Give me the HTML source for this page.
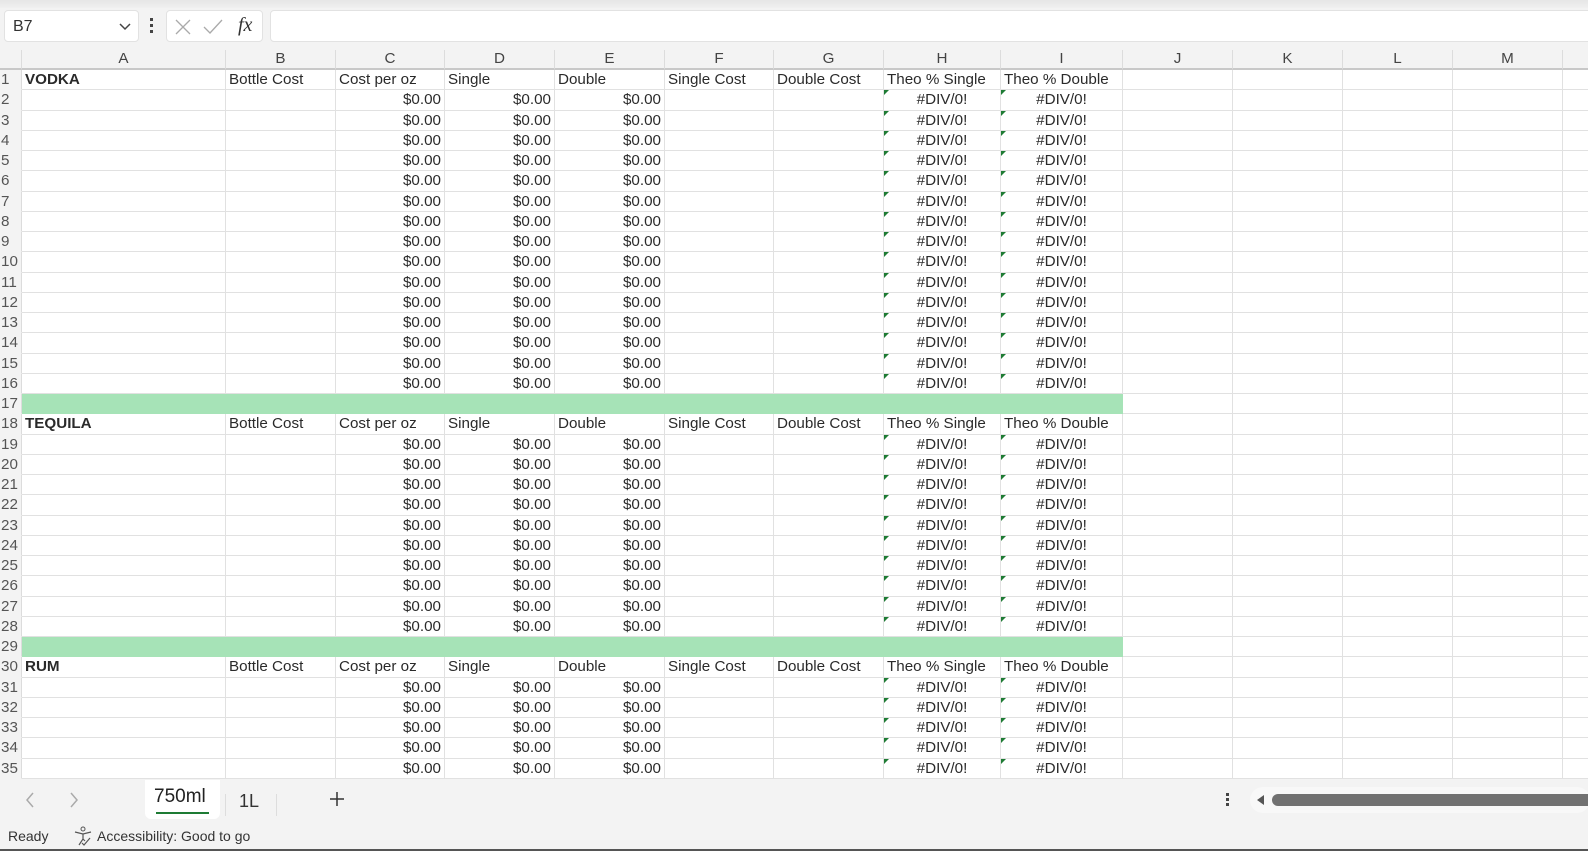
<!DOCTYPE html>
<html><head><meta charset="utf-8"><style>
*{box-sizing:border-box}
body{margin:0;width:1588px;height:851px;overflow:hidden;background:#f3f3f3;font-family:"Liberation Sans",Arial,sans-serif;position:relative}
.top{position:absolute;left:0;top:0;width:1588px;height:8px;background:linear-gradient(#e6e6e6,#f0f0f0)}
.nb{position:absolute;left:4px;top:10px;width:135px;height:32px;background:#fff;border:1px solid #e2e2e2;border-radius:4px;font-size:16px;color:#333;padding:7px 0 0 8px}
.fx{position:absolute;left:166px;top:10px;width:97px;height:32px;background:#fff;border:1px solid #e2e2e2;border-radius:4px}
.fb{position:absolute;left:270px;top:10px;width:1330px;height:32px;background:#fff;border:1px solid #e2e2e2;border-radius:4px}
table{position:absolute;left:0;top:50px;border-collapse:separate;border-spacing:0;table-layout:fixed;width:1613px;font-size:15.2px;color:#2a2a2a}
td{height:20.26px;padding:0 3px;border:0;border-right:1px solid #e1e1e1;border-bottom:1px solid #e1e1e1;background:#fff;white-space:nowrap;overflow:hidden;line-height:19px}
tr.h td{height:20px;background:#f3f3f3;color:#444;text-align:center;border-right-color:#dcdcdc;border-bottom:2px solid #c8c8c8;line-height:18px}
td.r{background:#f3f3f3;color:#555;padding:0 1px;border-bottom-color:#f3f3f3;border-right:1px solid #dcdcdc}
.n{text-align:right}
.d{text-align:center;position:relative}
.d:before{content:"";position:absolute;left:0;top:0;border-top:5px solid #1e7b34;border-right:5px solid transparent}
.g td.c{background:#a6e3b7;border-color:#a6e3b7}
.b{font-weight:bold}
.tabs{position:absolute;left:0;top:780px;width:1588px;height:43px;background:#f3f3f3}
.status{position:absolute;left:0;top:823px;width:1588px;height:26px;background:#f3f3f3;font-size:14px;color:#333}
.bot{position:absolute;left:0;top:849px;width:1588px;height:2px;background:#555}
</style></head><body>
<div class="top"></div>
<div class="nb">B7<svg style="position:absolute;left:114px;top:12px" width="12" height="8"><path d="M1 1l5 5 5-5" stroke="#444" stroke-width="1.5" fill="none"/></svg></div>
<div style="position:absolute;left:150px;top:18px;width:3px;height:16px"><div style="width:3px;height:3px;background:#444;margin-bottom:3px"></div><div style="width:3px;height:3px;background:#444;margin-bottom:3px"></div><div style="width:3px;height:3px;background:#444"></div></div>
<div class="fx"><svg style="position:absolute;left:8px;top:8px" width="16" height="16"><path d="M1 1l14 14M15 1L1 15" stroke="#aaa" stroke-width="1.3"/></svg><svg style="position:absolute;left:36px;top:8px" width="20" height="16"><path d="M1 8l6 6L19 1" stroke="#aaa" stroke-width="1.3" fill="none"/></svg><span style="position:absolute;left:71px;top:3px;font-family:'Liberation Serif',serif;font-style:italic;font-size:20px;color:#333">fx</span></div>
<div class="fb"></div>
<table>
<colgroup><col style="width:22px"><col style="width:204px"><col style="width:110px"><col style="width:109px"><col style="width:110px"><col style="width:110px"><col style="width:109px"><col style="width:110px"><col style="width:117px"><col style="width:122px"><col style="width:110px"><col style="width:110px"><col style="width:110px"><col style="width:110px"><col style="width:50px"></colgroup>
<tr class="h"><td style="border-right:1px solid #dcdcdc"></td><td>A</td><td>B</td><td>C</td><td>D</td><td>E</td><td>F</td><td>G</td><td>H</td><td>I</td><td>J</td><td>K</td><td>L</td><td>M</td><td></td></tr>
<tr><td class="r">1</td><td class="b">VODKA</td><td>Bottle Cost</td><td>Cost per oz</td><td>Single</td><td>Double</td><td>Single Cost</td><td>Double Cost</td><td>Theo % Single</td><td>Theo % Double</td><td></td><td></td><td></td><td></td><td></td></tr>
<tr><td class="r">2</td><td></td><td></td><td class="n">$0.00</td><td class="n">$0.00</td><td class="n">$0.00</td><td></td><td></td><td class="d">#DIV/0!</td><td class="d">#DIV/0!</td><td></td><td></td><td></td><td></td><td></td></tr>
<tr><td class="r">3</td><td></td><td></td><td class="n">$0.00</td><td class="n">$0.00</td><td class="n">$0.00</td><td></td><td></td><td class="d">#DIV/0!</td><td class="d">#DIV/0!</td><td></td><td></td><td></td><td></td><td></td></tr>
<tr><td class="r">4</td><td></td><td></td><td class="n">$0.00</td><td class="n">$0.00</td><td class="n">$0.00</td><td></td><td></td><td class="d">#DIV/0!</td><td class="d">#DIV/0!</td><td></td><td></td><td></td><td></td><td></td></tr>
<tr><td class="r">5</td><td></td><td></td><td class="n">$0.00</td><td class="n">$0.00</td><td class="n">$0.00</td><td></td><td></td><td class="d">#DIV/0!</td><td class="d">#DIV/0!</td><td></td><td></td><td></td><td></td><td></td></tr>
<tr><td class="r">6</td><td></td><td></td><td class="n">$0.00</td><td class="n">$0.00</td><td class="n">$0.00</td><td></td><td></td><td class="d">#DIV/0!</td><td class="d">#DIV/0!</td><td></td><td></td><td></td><td></td><td></td></tr>
<tr><td class="r">7</td><td></td><td></td><td class="n">$0.00</td><td class="n">$0.00</td><td class="n">$0.00</td><td></td><td></td><td class="d">#DIV/0!</td><td class="d">#DIV/0!</td><td></td><td></td><td></td><td></td><td></td></tr>
<tr><td class="r">8</td><td></td><td></td><td class="n">$0.00</td><td class="n">$0.00</td><td class="n">$0.00</td><td></td><td></td><td class="d">#DIV/0!</td><td class="d">#DIV/0!</td><td></td><td></td><td></td><td></td><td></td></tr>
<tr><td class="r">9</td><td></td><td></td><td class="n">$0.00</td><td class="n">$0.00</td><td class="n">$0.00</td><td></td><td></td><td class="d">#DIV/0!</td><td class="d">#DIV/0!</td><td></td><td></td><td></td><td></td><td></td></tr>
<tr><td class="r">10</td><td></td><td></td><td class="n">$0.00</td><td class="n">$0.00</td><td class="n">$0.00</td><td></td><td></td><td class="d">#DIV/0!</td><td class="d">#DIV/0!</td><td></td><td></td><td></td><td></td><td></td></tr>
<tr><td class="r">11</td><td></td><td></td><td class="n">$0.00</td><td class="n">$0.00</td><td class="n">$0.00</td><td></td><td></td><td class="d">#DIV/0!</td><td class="d">#DIV/0!</td><td></td><td></td><td></td><td></td><td></td></tr>
<tr><td class="r">12</td><td></td><td></td><td class="n">$0.00</td><td class="n">$0.00</td><td class="n">$0.00</td><td></td><td></td><td class="d">#DIV/0!</td><td class="d">#DIV/0!</td><td></td><td></td><td></td><td></td><td></td></tr>
<tr><td class="r">13</td><td></td><td></td><td class="n">$0.00</td><td class="n">$0.00</td><td class="n">$0.00</td><td></td><td></td><td class="d">#DIV/0!</td><td class="d">#DIV/0!</td><td></td><td></td><td></td><td></td><td></td></tr>
<tr><td class="r">14</td><td></td><td></td><td class="n">$0.00</td><td class="n">$0.00</td><td class="n">$0.00</td><td></td><td></td><td class="d">#DIV/0!</td><td class="d">#DIV/0!</td><td></td><td></td><td></td><td></td><td></td></tr>
<tr><td class="r">15</td><td></td><td></td><td class="n">$0.00</td><td class="n">$0.00</td><td class="n">$0.00</td><td></td><td></td><td class="d">#DIV/0!</td><td class="d">#DIV/0!</td><td></td><td></td><td></td><td></td><td></td></tr>
<tr><td class="r">16</td><td></td><td></td><td class="n">$0.00</td><td class="n">$0.00</td><td class="n">$0.00</td><td></td><td></td><td class="d">#DIV/0!</td><td class="d">#DIV/0!</td><td></td><td></td><td></td><td></td><td></td></tr>
<tr class="g"><td class="r">17</td><td class="c"></td><td class="c"></td><td class="c"></td><td class="c"></td><td class="c"></td><td class="c"></td><td class="c"></td><td class="c"></td><td class="c"></td><td></td><td></td><td></td><td></td><td></td></tr>
<tr><td class="r">18</td><td class="b">TEQUILA</td><td>Bottle Cost</td><td>Cost per oz</td><td>Single</td><td>Double</td><td>Single Cost</td><td>Double Cost</td><td>Theo % Single</td><td>Theo % Double</td><td></td><td></td><td></td><td></td><td></td></tr>
<tr><td class="r">19</td><td></td><td></td><td class="n">$0.00</td><td class="n">$0.00</td><td class="n">$0.00</td><td></td><td></td><td class="d">#DIV/0!</td><td class="d">#DIV/0!</td><td></td><td></td><td></td><td></td><td></td></tr>
<tr><td class="r">20</td><td></td><td></td><td class="n">$0.00</td><td class="n">$0.00</td><td class="n">$0.00</td><td></td><td></td><td class="d">#DIV/0!</td><td class="d">#DIV/0!</td><td></td><td></td><td></td><td></td><td></td></tr>
<tr><td class="r">21</td><td></td><td></td><td class="n">$0.00</td><td class="n">$0.00</td><td class="n">$0.00</td><td></td><td></td><td class="d">#DIV/0!</td><td class="d">#DIV/0!</td><td></td><td></td><td></td><td></td><td></td></tr>
<tr><td class="r">22</td><td></td><td></td><td class="n">$0.00</td><td class="n">$0.00</td><td class="n">$0.00</td><td></td><td></td><td class="d">#DIV/0!</td><td class="d">#DIV/0!</td><td></td><td></td><td></td><td></td><td></td></tr>
<tr><td class="r">23</td><td></td><td></td><td class="n">$0.00</td><td class="n">$0.00</td><td class="n">$0.00</td><td></td><td></td><td class="d">#DIV/0!</td><td class="d">#DIV/0!</td><td></td><td></td><td></td><td></td><td></td></tr>
<tr><td class="r">24</td><td></td><td></td><td class="n">$0.00</td><td class="n">$0.00</td><td class="n">$0.00</td><td></td><td></td><td class="d">#DIV/0!</td><td class="d">#DIV/0!</td><td></td><td></td><td></td><td></td><td></td></tr>
<tr><td class="r">25</td><td></td><td></td><td class="n">$0.00</td><td class="n">$0.00</td><td class="n">$0.00</td><td></td><td></td><td class="d">#DIV/0!</td><td class="d">#DIV/0!</td><td></td><td></td><td></td><td></td><td></td></tr>
<tr><td class="r">26</td><td></td><td></td><td class="n">$0.00</td><td class="n">$0.00</td><td class="n">$0.00</td><td></td><td></td><td class="d">#DIV/0!</td><td class="d">#DIV/0!</td><td></td><td></td><td></td><td></td><td></td></tr>
<tr><td class="r">27</td><td></td><td></td><td class="n">$0.00</td><td class="n">$0.00</td><td class="n">$0.00</td><td></td><td></td><td class="d">#DIV/0!</td><td class="d">#DIV/0!</td><td></td><td></td><td></td><td></td><td></td></tr>
<tr><td class="r">28</td><td></td><td></td><td class="n">$0.00</td><td class="n">$0.00</td><td class="n">$0.00</td><td></td><td></td><td class="d">#DIV/0!</td><td class="d">#DIV/0!</td><td></td><td></td><td></td><td></td><td></td></tr>
<tr class="g"><td class="r">29</td><td class="c"></td><td class="c"></td><td class="c"></td><td class="c"></td><td class="c"></td><td class="c"></td><td class="c"></td><td class="c"></td><td class="c"></td><td></td><td></td><td></td><td></td><td></td></tr>
<tr><td class="r">30</td><td class="b">RUM</td><td>Bottle Cost</td><td>Cost per oz</td><td>Single</td><td>Double</td><td>Single Cost</td><td>Double Cost</td><td>Theo % Single</td><td>Theo % Double</td><td></td><td></td><td></td><td></td><td></td></tr>
<tr><td class="r">31</td><td></td><td></td><td class="n">$0.00</td><td class="n">$0.00</td><td class="n">$0.00</td><td></td><td></td><td class="d">#DIV/0!</td><td class="d">#DIV/0!</td><td></td><td></td><td></td><td></td><td></td></tr>
<tr><td class="r">32</td><td></td><td></td><td class="n">$0.00</td><td class="n">$0.00</td><td class="n">$0.00</td><td></td><td></td><td class="d">#DIV/0!</td><td class="d">#DIV/0!</td><td></td><td></td><td></td><td></td><td></td></tr>
<tr><td class="r">33</td><td></td><td></td><td class="n">$0.00</td><td class="n">$0.00</td><td class="n">$0.00</td><td></td><td></td><td class="d">#DIV/0!</td><td class="d">#DIV/0!</td><td></td><td></td><td></td><td></td><td></td></tr>
<tr><td class="r">34</td><td></td><td></td><td class="n">$0.00</td><td class="n">$0.00</td><td class="n">$0.00</td><td></td><td></td><td class="d">#DIV/0!</td><td class="d">#DIV/0!</td><td></td><td></td><td></td><td></td><td></td></tr>
<tr><td class="r">35</td><td></td><td></td><td class="n">$0.00</td><td class="n">$0.00</td><td class="n">$0.00</td><td></td><td></td><td class="d">#DIV/0!</td><td class="d">#DIV/0!</td><td></td><td></td><td></td><td></td><td></td></tr>
</table>
<div class="tabs">
<svg style="position:absolute;left:25px;top:12px" width="10" height="16"><path d="M8 1L2 8l6 7" stroke="#aaa" stroke-width="1.5" fill="none"/></svg>
<svg style="position:absolute;left:69px;top:12px" width="10" height="16"><path d="M2 1l6 7-6 7" stroke="#aaa" stroke-width="1.5" fill="none"/></svg>
<div style="position:absolute;left:145px;top:0;width:75px;height:39px;background:#fff;border-radius:0 0 6px 6px"></div>
<div style="position:absolute;left:154px;top:6px;font-size:19px;color:#222">750ml</div>
<div style="position:absolute;left:156px;top:32px;width:53px;height:2px;background:#1e7b34"></div>
<div style="position:absolute;left:225px;top:14px;width:1px;height:22px;background:#ddd"></div>
<div style="position:absolute;left:239px;top:11px;font-size:18px;color:#333">1L</div>
<div style="position:absolute;left:276px;top:14px;width:1px;height:22px;background:#ddd"></div>
<svg style="position:absolute;left:329px;top:11px" width="16" height="16"><path d="M8 1v14M1 8h14" stroke="#333" stroke-width="1.5"/></svg>
<div style="position:absolute;left:1226px;top:13px"><div style="width:3px;height:3px;background:#444;margin-bottom:2px"></div><div style="width:3px;height:3px;background:#444;margin-bottom:2px"></div><div style="width:3px;height:3px;background:#444"></div></div>
<div style="position:absolute;left:1250px;top:7px;width:340px;height:26px;background:#f8f8f8;border-radius:13px"></div>
<svg style="position:absolute;left:1256px;top:14px" width="10" height="12"><path d="M8 1L1 6l7 5z" fill="#555"/></svg>
<div style="position:absolute;left:1272px;top:14px;width:330px;height:12px;background:#717171;border-radius:6px"></div>
</div>
<div class="status"><span style="position:absolute;left:8px;top:5px">Ready</span>
<svg style="position:absolute;left:73px;top:3px" width="20" height="20"><circle cx="10" cy="3" r="2" stroke="#555" fill="none"/><path d="M2 6l8 2 8-2M10 8v5l-4 6M10 13l2 2M9 17l2 2 6-7" stroke="#555" stroke-width="1.2" fill="none"/></svg>
<span style="position:absolute;left:97px;top:5px">Accessibility: Good to go</span></div>
<div class="bot"></div>
</body></html>
